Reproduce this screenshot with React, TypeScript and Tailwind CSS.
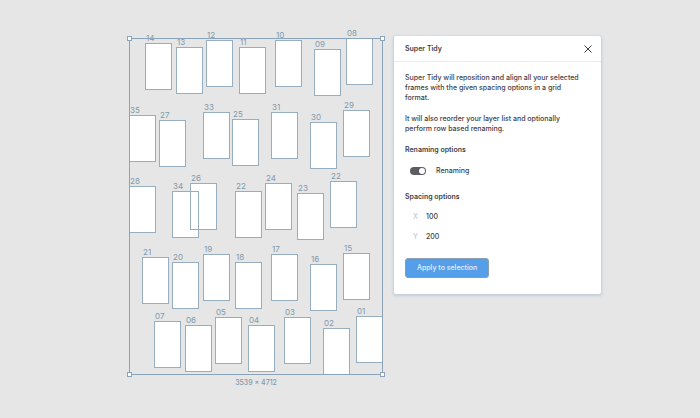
import { useState } from "react";

type Frame = { name: string; x: number; y: number };

const frames: Frame[] = [
  { name: "14", x: 145, y: 43 },
  { name: "13", x: 176, y: 47 },
  { name: "12", x: 206, y: 40 },
  { name: "11", x: 239, y: 47 },
  { name: "10", x: 275, y: 40 },
  { name: "09", x: 314, y: 49 },
  { name: "08", x: 346, y: 38 },
  { name: "35", x: 129, y: 115 },
  { name: "27", x: 159, y: 120 },
  { name: "33", x: 203, y: 112 },
  { name: "25", x: 232, y: 119 },
  { name: "31", x: 271, y: 112 },
  { name: "30", x: 310, y: 122 },
  { name: "29", x: 343, y: 110 },
  { name: "28", x: 129, y: 186 },
  { name: "34", x: 172, y: 191 },
  { name: "26", x: 190, y: 183 },
  { name: "22", x: 235, y: 191 },
  { name: "24", x: 265, y: 183 },
  { name: "23", x: 297, y: 193 },
  { name: "22", x: 330, y: 181 },
  { name: "21", x: 142, y: 257 },
  { name: "20", x: 172, y: 262 },
  { name: "19", x: 203, y: 254 },
  { name: "18", x: 235, y: 262 },
  { name: "17", x: 271, y: 254 },
  { name: "16", x: 310, y: 264 },
  { name: "15", x: 343, y: 253 },
  { name: "07", x: 154, y: 321 },
  { name: "06", x: 185, y: 325 },
  { name: "05", x: 215, y: 317 },
  { name: "04", x: 248, y: 325 },
  { name: "03", x: 284, y: 317 },
  { name: "02", x: 323, y: 328 },
  { name: "01", x: 356, y: 316 },
];

const handles = [
  "-left-[3px] -top-[3px]",
  "-right-[3px] -top-[3px]",
  "-left-[3px] -bottom-[3px]",
  "-right-[3px] -bottom-[3px]",
];

function Canvas() {
  return (
    <div className="relative w-[394px] shrink-0 text-[7px] leading-[8px] text-[#8199ad]">
      {frames.map((f, i) => (
        <div key={i} className="absolute h-[47px] w-[27px] border border-[#97adc0] bg-white" style={{ left: f.x, top: f.y }} />
      ))}
      {frames.map((f, i) => (
        <div key={i} className="absolute h-[47px] w-[27px] border border-[#97adc0]" style={{ left: f.x, top: f.y }}>
          <span className="absolute -top-[10px] left-0 text-[8px]">{f.name}</span>
        </div>
      ))}
      <div className="absolute left-[129px] top-[38px] h-[337px] w-[254px] border border-[#8ba4b9]">
        {handles.map((place) => (
          <span key={place} className={`absolute size-[5px] border border-[#8ba4b9] bg-white ${place}`} />
        ))}
        <span className="absolute inset-x-0 top-[340px] text-center font-medium">3539 × 4712</span>
      </div>
    </div>
  );
}

function SpacingField({ axis, initial }: { axis: string; initial: string }) {
  const [value, setValue] = useState(initial);
  return (
    <label className="flex h-5 items-center pl-2">
      <span className="w-[13px] text-[#c4c8cc]">{axis}</span>
      <input
        className="w-20 bg-transparent outline-none"
        value={value}
        onChange={(e) => setValue(e.target.value)}
      />
    </label>
  );
}

function Panel() {
  const [renaming, setRenaming] = useState(true);
  return (
    <section className="mt-9 w-[207px] rounded-[2px] bg-white pb-4 text-[7px] leading-[10px] text-[#3d4146] shadow-[0_1px_3px_1px_#c3cdd6]">
      <header className="flex h-[26px] items-center justify-between border-b border-[#e8eaec] pl-[11px] pr-[9px]">
        <h1 className="font-semibold">Super Tidy</h1>
        <button type="button" aria-label="Close">
          <svg className="size-2" viewBox="0 0 8 8" fill="none" stroke="#3a3d40" strokeWidth="1">
            <path d="M.5.5l7 7M7.5.5l-7 7" />
          </svg>
        </button>
      </header>
      <div className="px-[11px] pt-[11px]">
        <div className="max-w-[176px] font-medium">
          <p>Super Tidy will reposition and align all your selected frames with the given spacing options in a grid format.</p>
          <p className="mt-[11px]">It will also reorder your layer list and optionally perform row based renaming.</p>
        </div>
        <h2 className="mt-[11px] font-semibold">Renaming options</h2>
        <label className="mt-[11px] flex items-center gap-[10px] pl-[5px] font-medium">
          <input
            type="checkbox"
            role="switch"
            checked={renaming}
            onChange={(e) => setRenaming(e.target.checked)}
            className="relative h-2 w-4 appearance-none rounded-full bg-[#5b5d60] before:absolute before:left-px before:top-px before:size-[6px] before:rounded-full before:bg-white checked:before:left-[9px]"
          />
          Renaming
        </label>
        <h2 className="mt-4 font-semibold">Spacing options</h2>
        <div className="mt-[5px] font-medium">
          <SpacingField axis="X" initial="100" />
          <SpacingField axis="Y" initial="200" />
        </div>
        <button type="button" className="mt-[11px] h-5 rounded-[3px] border border-[#8b9db0] bg-[#559fea] px-[11px] font-medium text-[#e6f1fc]">
          Apply to selection
        </button>
      </div>
    </section>
  );
}

export default function App() {
  return (
    <main className="flex min-h-screen items-start bg-[#e6e6e6] font-['Inter','Liberation_Sans',sans-serif]">
      <Canvas />
      <Panel />
    </main>
  );
}
